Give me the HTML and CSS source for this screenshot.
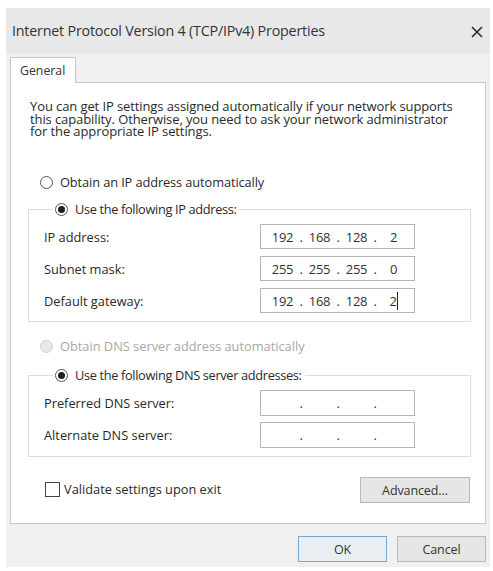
FILE: index.html
```html
<!DOCTYPE html>
<html>
<head>
<meta charset="utf-8">
<link rel="stylesheet" href="styles.css">
</head>
<body>
<div class="dialog">
  <div class="titlebar">
    <span class="title">Internet Protocol Version 4 (TCP/IPv4) Properties</span>
    <svg class="close" width="12" height="12" viewBox="0 0 12 12"><path d="M1 1L11 11M11 1L1 11" stroke="#2b2b2b" stroke-width="1.6" fill="none"/></svg>
  </div>
  <div class="tabs"><div class="tab">General</div></div>
  <div class="panel">
    <p class="intro">You can get IP settings assigned automatically if your network supports<br>this capability. Otherwise, you need to ask your network administrator<br>for the appropriate IP settings.</p>
    <div class="radio-row first"><span class="radio"></span>Obtain an IP address automatically</div>
    <fieldset class="group">
      <legend class="radio-row"><span class="radio checked"></span>Use the following IP address:</legend>
      <div class="field"><span class="label">IP address:</span><div class="ipbox"><span class="seg">192</span><span class="dot">.</span><span class="seg">168</span><span class="dot">.</span><span class="seg">128</span><span class="dot">.</span><span class="seg">2</span></div></div>
      <div class="field"><span class="label">Subnet mask:</span><div class="ipbox"><span class="seg">255</span><span class="dot">.</span><span class="seg">255</span><span class="dot">.</span><span class="seg">255</span><span class="dot">.</span><span class="seg">0</span></div></div>
      <div class="field"><span class="label">Default gateway:</span><div class="ipbox"><span class="seg">192</span><span class="dot">.</span><span class="seg">168</span><span class="dot">.</span><span class="seg">128</span><span class="dot">.</span><span class="seg"><span class="caret">2</span></span></div></div>
    </fieldset>
    <div class="radio-row disabled"><span class="radio"></span>Obtain DNS server address automatically</div>
    <fieldset class="group dns">
      <legend class="radio-row"><span class="radio checked"></span>Use the following DNS server addresses:</legend>
      <div class="field"><span class="label">Preferred DNS server:</span><div class="ipbox tall"><span class="seg"></span><span class="dot">.</span><span class="seg"></span><span class="dot">.</span><span class="seg"></span><span class="dot">.</span><span class="seg"></span></div></div>
      <div class="field"><span class="label">Alternate DNS server:</span><div class="ipbox tall"><span class="seg"></span><span class="dot">.</span><span class="seg"></span><span class="dot">.</span><span class="seg"></span><span class="dot">.</span><span class="seg"></span></div></div>
    </fieldset>
    <div class="bottom-row">
      <label class="check"><span class="box"></span>Validate settings upon exit</label>
      <button class="btn advanced">Advanced...</button>
    </div>
  </div>
  <div class="footer">
    <button class="btn ok">OK</button>
    <button class="btn">Cancel</button>
  </div>
</div>
</body>
</html>
```
FILE: styles.css
```css
* { box-sizing: border-box; }
html, body { margin: 0; padding: 0; background: #ffffff; }
body {
  font-family: "Open Sans", "Noto Sans", sans-serif;
  font-size: 12.8px;
  color: #2a2a2a;
}
.dialog {
  margin: 8px 3px 0 6px;
  width: 484px;
  height: 559px;
  background: #f0f0f0;
  display: flex;
  flex-direction: column;
}
.titlebar {
  height: 46px;
  background: #e8e8e8;
  display: flex;
  align-items: flex-start;
  justify-content: space-between;
  padding: 13px 7px 0 6px;
}
.title {
  font-size: 14.3px;
  letter-spacing: -0.2px;
  color: #333;
  line-height: 20px;
}
.close { margin-top: 5px; }
.tabs {
  margin: 3px 0 0 4px;
  display: flex;
  position: relative;
  z-index: 1;
  margin-bottom: -1px;
}
.tab {
  width: 66px;
  height: 26px;
  background: #fff;
  border: 1px solid #c8c8c8;
  border-bottom: none;
  padding: 4px 0 0 9px;
  font-size: 12.3px;
  color: #333;
}
.panel {
  margin: 0 4px;
  background: #fff;
  border: 1px solid #c8c8c8;
  height: 442px;
  display: flex;
  flex-direction: column;
}
.intro {
  margin: 17px 0 0 19px;
  font-size: 13px;
  line-height: 12.6px;
  letter-spacing: -0.1px;
  color: #2a2a2a;
}
.radio-row {
  display: flex;
  align-items: center;
  height: 16px;
  gap: 7px;
  letter-spacing: -0.1px;
}
.radio-row.first { margin: 36.5px 0 0 29px; }
.radio {
  width: 13px;
  height: 13px;
  flex: none;
  border: 1px solid #555;
  border-radius: 50%;
  background: #fff;
  display: flex;
  align-items: center;
  justify-content: center;
}
.radio.checked::after {
  content: "";
  width: 7px;
  height: 7px;
  border-radius: 50%;
  background: #1f1f1f;
}
.group {
  margin: 11px 14px 0 17px;
  padding: 7px 0 8px 15px;
  border: 1px solid #dcdcdc;
  display: flex;
  flex-direction: column;
  gap: 7px;
  min-width: 0;
}
.group legend {
  margin-left: 9px;
  padding: 0 3px 0 2px;
  background: #fff;
  letter-spacing: -0.35px;
}
.field {
  display: flex;
  align-items: center;
  height: 25px;
}
.label {
  width: 216px;
  letter-spacing: 0;
}
.ipbox {
  width: 155px;
  height: 25px;
  border: 1px solid #b5b5b5;
  background: #fff;
  display: flex;
  align-items: center;
  padding-left: 7px;
  font-size: 13px;
  color: #333;
  letter-spacing: -0.3px;
}
.ipbox.tall { height: 26px; }
.seg { width: 29px; text-align: center; }
.dot { width: 8px; text-align: center; }
.caret { border-right: 1px solid #222; }
.radio-row.disabled {
  margin: 16px 0 0 29px;
  color: #a8a8a8;
  letter-spacing: 0;
}
.radio-row.disabled .radio {
  border-color: #cfcfcf;
  background: #e8e8e8;
}
.group.dns {
  margin-top: 13px;
  padding-bottom: 9px;
  gap: 7px;
}
.bottom-row {
  margin: 20px 15px 0 34px;
  display: flex;
  align-items: center;
  justify-content: space-between;
  height: 26px;
}
.check {
  display: flex;
  align-items: center;
  gap: 4px;
  letter-spacing: 0;
  margin-top: -2px;
}
.box {
  width: 15px;
  height: 15px;
  border: 1px solid #444;
  background: #fff;
}
.btn {
  font-family: "Open Sans", "Noto Sans", sans-serif;
  font-size: 12.5px;
  color: #333;
  background: #e6e6e6;
  border: 1px solid #b9b9b9;
  height: 26px;
  padding: 0;
  letter-spacing: -0.1px;
}
.advanced { width: 110px; }
.footer {
  display: flex;
  justify-content: flex-end;
  gap: 10px;
  padding: 12px 4px 0 0;
}
.footer .btn { width: 89px; }
.btn.ok {
  border-color: #7aa6cc;
  background: #e9eef3;
}
```
